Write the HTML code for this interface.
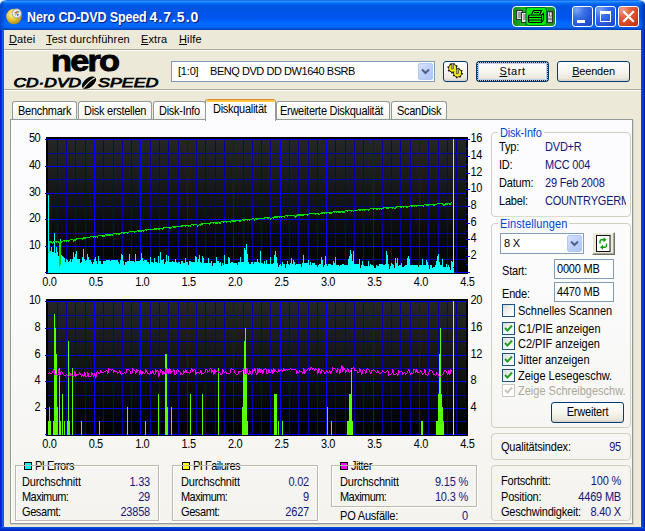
<!DOCTYPE html>
<html lang="de">
<head>
<meta charset="utf-8">
<title>Nero CD-DVD Speed 4.7.5.0</title>
<style>
*{box-sizing:border-box;margin:0;padding:0}
html,body{width:645px;height:531px;overflow:hidden}
body{position:relative;background:#ece9d8;font-family:"Liberation Sans",Arial,sans-serif;font-size:11px;color:#000;line-height:13px;-webkit-font-smoothing:antialiased}
.abs{position:absolute}
.t{position:absolute;white-space:nowrap;letter-spacing:-0.2px}
.h{transform:scaleY(1.13);transform-origin:0 10px}
.tab>span{display:inline-block;transform:scaleY(1.13);transform-origin:0 4px}
u{text-decoration:underline;text-underline-offset:1px}
/* window frame */
#frame{position:absolute;left:0;top:0;width:645px;height:531px;background:#0831d9;border-radius:7px 7px 0 0;overflow:hidden}
#corners{position:absolute;left:0;top:0;width:645px;height:10px;background:#fff}
#title{position:absolute;left:0;top:0;width:645px;height:30px;border-radius:7px 7px 0 0;
background:linear-gradient(180deg,#0058ee 0%,#3593ff 4%,#288eff 6%,#127dff 8%,#036ffc 10%,#0262ee 14%,#0057e5 20%,#0054e3 24%,#0055eb 56%,#005bf5 66%,#026afe 76%,#0266f6 90%,#0052d4 95%,#003cb0 100%)}
#title:before{content:"";position:absolute;left:0;top:0;width:5px;height:30px;border-radius:8px 0 0 0;background:linear-gradient(90deg,#0046c8,rgba(0,70,200,0))}
#title:after{content:"";position:absolute;right:0;top:0;width:5px;height:30px;border-radius:0 8px 0 0;background:linear-gradient(270deg,#0034a8,rgba(0,52,168,0))}
.ttext{position:absolute;left:27px;top:9px;font-size:14px;line-height:17px;font-weight:bold;color:#fff;white-space:nowrap;letter-spacing:-0.1px;text-shadow:1px 1px 1px #0a1883;transform-origin:0 0}
#client{position:absolute;left:4px;top:30px;width:637px;height:497px;background:#ece9d8}
#lb{position:absolute;left:0;top:30px;width:4px;height:501px;background:linear-gradient(90deg,#0019cf 0,#0831d9 40%,#166aee 70%,#0855dd 100%)}
#rb{position:absolute;left:641px;top:30px;width:4px;height:501px;background:linear-gradient(90deg,#0855dd 0,#0039d6 40%,#0831d9 70%,#00138c 100%)}
#bb{position:absolute;left:0;top:527px;width:645px;height:4px;background:linear-gradient(180deg,#0855dd 0,#0039d6 40%,#0831d9 70%,#00138c 100%)}
.cbtn{position:absolute;top:6px;width:21px;height:21px;border:1px solid #fff;border-radius:3px;background:radial-gradient(circle at 20% 15%,#7ea6f5 0,#3a6fe8 35%,#2254d8 70%,#1b46c4 100%)}
#bclose{background:radial-gradient(circle at 20% 15%,#f2a18a 0,#e0613c 35%,#cf4420 70%,#b5300f 100%)}
.sep{position:absolute;left:4px;width:637px;height:2px;border-top:1px solid #aca899;border-bottom:1px solid #fff}
/* buttons */
.btn{position:absolute;letter-spacing:0.15px;height:21px;border:1px solid #003c74;border-radius:3px;background:linear-gradient(180deg,#fff 0,#f6f5ef 50%,#ebe8dc 85%,#d6d0c5 100%);text-align:center;line-height:19px;font-size:11px}
.edit{position:absolute;background:#fff;border:1px solid #7f9db9}
.ddb{position:absolute;width:15px;height:17px;border:1px solid #b4c8f7;border-radius:2px;background:linear-gradient(135deg,#d6e1fd 0,#c1d2fa 45%,#aec3f6 100%)}
.tab{position:absolute;top:101px;height:19px;border:1px solid #919b9c;border-bottom:none;border-radius:3px 3px 0 0;background:linear-gradient(180deg,#fff 0,#fbfbf8 60%,#efeee6 100%);font-size:11px;line-height:17px;padding-left:5px;white-space:nowrap;letter-spacing:-0.28px}
#page{position:absolute;left:10px;top:119px;width:623px;height:405px;border:1px solid #919b9c;background:linear-gradient(180deg,#fcfcfe 0,#fbfbfc 40%,#f4f3ee 100%);box-shadow:1px 1px 0 #d5d2c4, inset 1px 0 0 #fff, inset 0 -2px 0 #fcfcfa}
.gb{position:absolute;border:1px solid #d0d0bf;border-radius:4px}
.gb2{position:absolute;z-index:5;border:1px solid #bcbaab}
.gb2w{position:absolute;border:1px solid #fff}
.lg{position:absolute;color:#0046d5;white-space:nowrap;letter-spacing:-0.2px}
.v{color:#15157a}
.r{text-align:right}
.cb{position:absolute;width:13px;height:13px;border:1px solid #1c5180;background:linear-gradient(135deg,#dcdcd7 0,#f3f3ef 50%,#fff 100%)}
.cb.dis{border-color:#cac8bb;background:#fff}
</style>
</head>
<body>
<div id="frame"></div>
<div id="corners"></div>
<div id="title">
  <div class="ttext" style="transform:scaleX(0.89)">Nero CD-DVD Speed</div><div class="ttext" style="left:149.5px;letter-spacing:1px">4.7.5.0</div>
</div>
<div id="lb"></div><div id="rb"></div><div id="bb"></div>
<div id="client"></div>

<!-- app icon -->
<svg class="abs" style="left:6px;top:8px" width="17" height="17" viewBox="0 0 17 17">
  <defs><radialGradient id="gold" cx="0.4" cy="0.35" r="0.7"><stop offset="0" stop-color="#fff6a0"/><stop offset="0.5" stop-color="#e8c838"/><stop offset="1" stop-color="#a88410"/></radialGradient></defs>
  <circle cx="8" cy="8.5" r="7.8" fill="url(#gold)"/>
  <circle cx="10.8" cy="5.4" r="4.6" fill="#e8eef4" stroke="#8a8f98" stroke-width="0.8"/>
  <path d="M8.2 5.2 L10.5 3 L11.2 5.5 Z" fill="#d63a1e"/>
  <path d="M11 2.6 L13.4 3.8 L11.6 5.2 Z" fill="#2f9a3c"/>
  <path d="M10.4 5.8 L13.2 6.2 L11.4 8.4 Z" fill="#2a78d8"/>
  <path d="M8.6 6.2 L10.2 6.4 L9.4 8 Z" fill="#e8a020"/>
</svg>

<!-- green toolbar in title -->
<div class="abs" style="left:512px;top:6px;width:44px;height:21px;border:1px solid #fff;border-radius:4px;background:linear-gradient(90deg,#0c8c10 0,#1fb822 28%,#0e9612 30%,#0e9612 72%,#1fb822 74%,#0c8c10 100%);overflow:hidden">
  <svg class="abs" style="left:0;top:0" width="42" height="19" viewBox="0 0 42 19">
    <!-- left: documents -->
    <rect x="3.5" y="3.5" width="6" height="9" fill="#d4d8d4" stroke="#333"/>
    <path d="M5 6h3M5 8h3M5 10h3" stroke="#666" stroke-width="1"/>
    <rect x="8.5" y="5.5" width="5" height="10" fill="#e4e6e4" stroke="#333"/>
    <path d="M10 8h3M10 10h3M10 12h3" stroke="#666" stroke-width="1"/>
    <!-- middle highlighted -->
    <rect x="13" y="0.5" width="20.5" height="18" rx="2.5" fill="#00f000" stroke="#063" stroke-width="1"/>
    <path d="M18.5 7.5 L20.5 3.5 H28.5 L26.5 7.5" fill="#00f000" stroke="#000" stroke-width="1.2"/>
    <path d="M21 5.5h5" stroke="#000" stroke-width="0.9"/>
    <path d="M17 8 H28.5 L30.5 6.5 V12.5 L28.5 15.5 H17 Q15.5 15.5 15.5 13.5 V9.5 Q15.5 8 17 8 Z" fill="#00f000" stroke="#000" stroke-width="1.2"/>
    <path d="M16 10.5 H28.5 M16 13 H28.5 M28.5 8 V15.5" stroke="#000" stroke-width="1" fill="none"/>
    <!-- right: floppy -->
    <rect x="34.5" y="4.5" width="5" height="11" fill="#c8ccc8" stroke="#333"/>
    <rect x="36.5" y="5" width="2.5" height="4" fill="#eee" stroke="#333" stroke-width="0.6"/>
    <path d="M35 12h4" stroke="#555"/>
  </svg>
</div>

<!-- caption buttons -->
<div class="cbtn" style="left:572px"><div class="abs" style="left:4px;top:13px;width:8px;height:3px;background:#fff"></div></div>
<div class="cbtn" style="left:595px"><div class="abs" style="left:4px;top:4px;width:11px;height:11px;border:1px solid #fff;border-top-width:3px"></div></div>
<div class="cbtn" id="bclose" style="left:618px">
  <svg class="abs" style="left:0;top:0" width="19" height="19" viewBox="0 0 19 19"><path d="M5 5 L14 14 M14 5 L5 14" stroke="#fff" stroke-width="2.2" stroke-linecap="square"/></svg>
</div>

<!-- menu -->
<div class="t" style="left:9px;top:33px;letter-spacing:0.12px"><u>D</u>atei</div>
<div class="t" style="left:46px;top:33px;letter-spacing:0.12px"><u>T</u>est durchführen</div>
<div class="t" style="left:141px;top:33px;letter-spacing:0.12px"><u>E</u>xtra</div>
<div class="t" style="left:179px;top:33px;letter-spacing:0.12px"><u>H</u>ilfe</div>
<div class="sep" style="top:49px"></div>
<div class="sep" style="top:89px"></div>

<!-- logo -->
<div class="abs" style="left:51px;top:45.5px;font-size:30px;line-height:30px;font-weight:bold;letter-spacing:-1.6px;color:#000;white-space:nowrap;-webkit-text-stroke:0.9px #000;transform:scaleX(1.145);transform-origin:0 0">nero</div>
<svg class="abs" style="left:12px;top:74px" width="150" height="18" viewBox="0 0 150 18">
  <g font-family="Liberation Sans, Arial, sans-serif" font-style="italic" font-size="12.6" fill="#000" stroke="#000" stroke-width="0.75">
    <text x="1.5" y="13" textLength="67.5" lengthAdjust="spacingAndGlyphs">CD·DVD</text>
    <text x="86" y="13" textLength="60.5" lengthAdjust="spacingAndGlyphs">SPEED</text>
  </g>
  <ellipse cx="77" cy="8.6" rx="8.2" ry="4.6" transform="rotate(-38 77 8.6)" fill="#000"/>
  <path d="M71.5 14 C74 11 78 6 83.5 3.5" stroke="#ece9d8" stroke-width="1.1" fill="none"/>
</svg>

<!-- drive combo -->
<div class="edit" style="left:171px;top:61px;width:264px;height:21px"></div>
<div class="t" style="left:178px;top:65px">[1:0]</div><div class="t" style="left:210px;top:65px;letter-spacing:-0.45px">BENQ DVD DD DW1640 BSRB</div>
<div class="ddb" style="left:418px;top:63px"><svg width="15" height="15" viewBox="0 0 15 15" style="position:absolute;left:-1px;top:0"><path d="M4 5.5 L7.5 9 L11 5.5" fill="none" stroke="#4d6185" stroke-width="2"/></svg></div>

<!-- icon button -->
<div class="btn" style="left:443px;top:61px;width:25px"></div>
<svg class="abs" style="left:446px;top:62px" width="18" height="17" viewBox="0 0 18 17">
  <g fill="#f4ec00" stroke="#1a1400" stroke-width="1">
    <circle cx="6.7" cy="6.2" r="4"/><circle cx="6.7" cy="6.2" r="4.6" fill="none" stroke-width="1.5" stroke-dasharray="1.5 2.1"/>
    <circle cx="11.6" cy="11" r="4"/><circle cx="11.6" cy="11" r="4.6" fill="none" stroke-width="1.5" stroke-dasharray="1.5 2.1"/>
  </g>
  <circle cx="6.7" cy="6.2" r="3.4" fill="#f4ec00"/><circle cx="11.6" cy="11" r="3.4" fill="#f4ec00"/>
  <rect x="5.7" y="1.5" width="2" height="5.5" fill="#9aa0a8" stroke="#333" stroke-width="0.5"/>
  <rect x="10.6" y="6.3" width="2" height="5.5" fill="#9aa0a8" stroke="#333" stroke-width="0.5"/>
</svg>

<!-- Start / Beenden -->
<div class="btn" style="left:476px;top:61px;width:73px;box-shadow:inset 0 0 0 2px #bdcff2"><div class="abs" style="left:0;top:0;width:71px;height:19px;border:1px dotted #221a10"></div><span class="t" style="position:relative;top:0;letter-spacing:0.55px"><u>S</u>tart</span></div>
<div class="btn" style="left:557px;top:61px;width:73px"><span class="t" style="position:relative"><u>B</u>eenden</span></div>

<!-- tabs -->
<div class="tab" style="left:12px;width:65px"><span>Benchmark</span></div>
<div class="tab" style="left:78px;width:74px"><span>Disk erstellen</span></div>
<div class="tab" style="left:153px;width:53px"><span>Disk-Info</span></div>
<div class="tab" style="left:276px;width:114px;padding-left:3px"><span>Erweiterte Diskqualität</span></div>
<div class="tab" style="left:391px;width:56px"><span>ScanDisk</span></div>
<div id="page"></div>
<div class="tab" style="left:205px;top:99px;width:71px;height:22px;background:#fcfcfe;border-top:none;padding-left:7px;line-height:18px;overflow:hidden"><div class="abs" style="left:-1px;top:0;width:72px;height:3px;border-radius:3px 3px 0 0;background:linear-gradient(180deg,#e68b2c 0,#e68b2c 34%,#ffc73c 34%,#ffc73c 100%)"></div><span>Diskqualität</span></div>

<svg width="645" height="531" viewBox="0 0 645 531" style="position:absolute;left:0;top:0" shape-rendering="crispEdges">
<defs><linearGradient id="g1" x1="0" y1="0" x2="0" y2="1"><stop offset="0" stop-color="#262626"/><stop offset="1" stop-color="#000"/></linearGradient><linearGradient id="g2" x1="0" y1="0" x2="0" y2="1"><stop offset="0" stop-color="#262626"/><stop offset="1" stop-color="#000"/></linearGradient></defs>
<rect x="46" y="137" width="422" height="137" fill="#000"/>
<rect x="48" y="139" width="418" height="134" fill="url(#g1)"/>
<rect x="57" y="139" width="1" height="134" fill="#0000a8"/>
<rect x="66" y="139" width="1" height="134" fill="#0000a8"/>
<rect x="75" y="139" width="1" height="134" fill="#0000a8"/>
<rect x="85" y="139" width="1" height="134" fill="#0000a8"/>
<rect x="94" y="139" width="1" height="134" fill="#0000ff"/>
<rect x="103" y="139" width="1" height="134" fill="#0000a8"/>
<rect x="113" y="139" width="1" height="134" fill="#0000a8"/>
<rect x="122" y="139" width="1" height="134" fill="#0000a8"/>
<rect x="131" y="139" width="1" height="134" fill="#0000a8"/>
<rect x="140" y="139" width="1" height="134" fill="#0000ff"/>
<rect x="150" y="139" width="1" height="134" fill="#0000a8"/>
<rect x="159" y="139" width="1" height="134" fill="#0000a8"/>
<rect x="168" y="139" width="1" height="134" fill="#0000a8"/>
<rect x="178" y="139" width="1" height="134" fill="#0000a8"/>
<rect x="187" y="139" width="1" height="134" fill="#0000ff"/>
<rect x="196" y="139" width="1" height="134" fill="#0000a8"/>
<rect x="205" y="139" width="1" height="134" fill="#0000a8"/>
<rect x="215" y="139" width="1" height="134" fill="#0000a8"/>
<rect x="224" y="139" width="1" height="134" fill="#0000a8"/>
<rect x="233" y="139" width="1" height="134" fill="#0000ff"/>
<rect x="243" y="139" width="1" height="134" fill="#0000a8"/>
<rect x="252" y="139" width="1" height="134" fill="#0000a8"/>
<rect x="261" y="139" width="1" height="134" fill="#0000a8"/>
<rect x="270" y="139" width="1" height="134" fill="#0000a8"/>
<rect x="280" y="139" width="1" height="134" fill="#0000ff"/>
<rect x="289" y="139" width="1" height="134" fill="#0000a8"/>
<rect x="298" y="139" width="1" height="134" fill="#0000a8"/>
<rect x="308" y="139" width="1" height="134" fill="#0000a8"/>
<rect x="317" y="139" width="1" height="134" fill="#0000a8"/>
<rect x="326" y="139" width="1" height="134" fill="#0000ff"/>
<rect x="335" y="139" width="1" height="134" fill="#0000a8"/>
<rect x="345" y="139" width="1" height="134" fill="#0000a8"/>
<rect x="354" y="139" width="1" height="134" fill="#0000a8"/>
<rect x="363" y="139" width="1" height="134" fill="#0000a8"/>
<rect x="373" y="139" width="1" height="134" fill="#0000ff"/>
<rect x="382" y="139" width="1" height="134" fill="#0000a8"/>
<rect x="391" y="139" width="1" height="134" fill="#0000a8"/>
<rect x="400" y="139" width="1" height="134" fill="#0000a8"/>
<rect x="410" y="139" width="1" height="134" fill="#0000a8"/>
<rect x="419" y="139" width="1" height="134" fill="#0000ff"/>
<rect x="428" y="139" width="1" height="134" fill="#0000a8"/>
<rect x="438" y="139" width="1" height="134" fill="#0000a8"/>
<rect x="447" y="139" width="1" height="134" fill="#0000a8"/>
<rect x="456" y="139" width="1" height="134" fill="#0000a8"/>
<rect x="45" y="272" width="421" height="1" fill="#0000ff"/>
<rect x="48" y="259" width="418" height="1" fill="#0000a8"/>
<rect x="45" y="246" width="421" height="1" fill="#0000ff"/>
<rect x="48" y="233" width="418" height="1" fill="#0000a8"/>
<rect x="45" y="219" width="421" height="1" fill="#0000ff"/>
<rect x="48" y="206" width="418" height="1" fill="#0000a8"/>
<rect x="45" y="193" width="421" height="1" fill="#0000ff"/>
<rect x="48" y="179" width="418" height="1" fill="#0000a8"/>
<rect x="45" y="166" width="421" height="1" fill="#0000ff"/>
<rect x="48" y="153" width="418" height="1" fill="#0000a8"/>
<rect x="45" y="139" width="421" height="1" fill="#0000ff"/>
<rect x="466" y="272" width="4" height="1" fill="#0000ff"/>
<rect x="466" y="264" width="2" height="1" fill="#0000ff"/>
<rect x="466" y="256" width="4" height="1" fill="#0000ff"/>
<rect x="466" y="248" width="2" height="1" fill="#0000ff"/>
<rect x="466" y="239" width="4" height="1" fill="#0000ff"/>
<rect x="466" y="231" width="2" height="1" fill="#0000ff"/>
<rect x="466" y="223" width="4" height="1" fill="#0000ff"/>
<rect x="466" y="214" width="2" height="1" fill="#0000ff"/>
<rect x="466" y="206" width="4" height="1" fill="#0000ff"/>
<rect x="466" y="198" width="2" height="1" fill="#0000ff"/>
<rect x="466" y="189" width="4" height="1" fill="#0000ff"/>
<rect x="466" y="181" width="2" height="1" fill="#0000ff"/>
<rect x="466" y="173" width="4" height="1" fill="#0000ff"/>
<rect x="466" y="164" width="2" height="1" fill="#0000ff"/>
<rect x="466" y="156" width="4" height="1" fill="#0000ff"/>
<rect x="466" y="148" width="2" height="1" fill="#0000ff"/>
<rect x="466" y="139" width="4" height="1" fill="#0000ff"/>
<polygon points="48,273 48,195 49,195 49,251 50,251 50,251 51,251 51,247 52,247 52,252 53,252 53,252 54,252 54,233 55,233 55,253 56,253 56,247 57,247 57,252 58,252 58,256 59,256 59,256 60,256 60,239 61,239 61,255 62,255 62,256 63,256 63,257 64,257 64,258 65,258 65,262 66,262 66,259 67,259 67,260 68,260 68,262 69,262 69,261 70,261 70,259 71,259 71,262 72,262 72,259 73,259 73,252 74,252 74,257 75,257 75,254 76,254 76,251 77,251 77,259 78,259 78,259 79,259 79,259 80,259 80,263 81,263 81,262 82,262 82,257 83,257 83,249 84,249 84,259 85,259 85,261 86,261 86,260 87,260 87,254 88,254 88,257 89,257 89,260 90,260 90,260 91,260 91,262 92,262 92,264 93,264 93,262 94,262 94,259 95,259 95,257 96,257 96,261 97,261 97,264 98,264 98,256 99,256 99,261 100,261 100,261 101,261 101,264 102,264 102,264 103,264 103,261 104,261 104,261 105,261 105,261 106,261 106,260 107,260 107,260 108,260 108,260 109,260 109,260 110,260 110,261 111,261 111,260 112,260 112,260 113,260 113,260 114,260 114,260 115,260 115,260 116,260 116,260 117,260 117,260 118,260 118,262 119,262 119,264 120,264 120,260 121,260 121,254 122,254 122,255 123,255 123,261 124,261 124,265 125,265 125,262 126,262 126,262 127,262 127,261 128,261 128,261 129,261 129,254 130,254 130,261 131,261 131,261 132,261 132,261 133,261 133,261 134,261 134,262 135,262 135,254 136,254 136,261 137,261 137,261 138,261 138,261 139,261 139,261 140,261 140,260 141,260 141,253 142,253 142,258 143,258 143,261 144,261 144,260 145,260 145,260 146,260 146,260 147,260 147,262 148,262 148,262 149,262 149,264 150,264 150,257 151,257 151,262 152,262 152,262 153,262 153,263 154,263 154,258 155,258 155,262 156,262 156,262 157,262 157,263 158,263 158,256 159,256 159,263 160,263 160,252 161,252 161,260 162,260 162,260 163,260 163,259 164,259 164,264 165,264 165,262 166,262 166,255 167,255 167,261 168,261 168,256 169,256 169,262 170,262 170,262 171,262 171,262 172,262 172,261 173,261 173,262 174,262 174,262 175,262 175,259 176,259 176,262 177,262 177,263 178,263 178,262 179,262 179,262 180,262 180,264 181,264 181,261 182,261 182,261 183,261 183,263 184,263 184,263 185,263 185,258 186,258 186,262 187,262 187,262 188,262 188,265 189,265 189,261 190,261 190,261 191,261 191,262 192,262 192,262 193,262 193,262 194,262 194,262 195,262 195,256 196,256 196,257 197,257 197,262 198,262 198,259 199,259 199,255 200,255 200,262 201,262 201,263 202,263 202,256 203,256 203,258 204,258 204,263 205,263 205,263 206,263 206,263 207,263 207,263 208,263 208,258 209,258 209,263 210,263 210,263 211,263 211,261 212,261 212,266 213,266 213,263 214,263 214,263 215,263 215,263 216,263 216,257 217,257 217,261 218,261 218,261 219,261 219,263 220,263 220,262 221,262 221,266 222,266 222,263 223,263 223,265 224,265 224,255 225,255 225,264 226,264 226,264 227,264 227,264 228,264 228,257 229,257 229,258 230,258 230,263 231,263 231,262 232,262 232,262 233,262 233,263 234,263 234,263 235,263 235,263 236,263 236,263 237,263 237,265 238,265 238,262 239,262 239,262 240,262 240,257 241,257 241,262 242,262 242,262 243,262 243,262 244,262 244,248 245,248 245,250 246,250 246,244 247,244 247,254 248,254 248,262 249,262 249,264 250,264 250,264 251,264 251,262 252,262 252,262 253,262 253,264 254,264 254,262 255,262 255,262 256,262 256,262 257,262 257,259 258,259 258,262 259,262 259,263 260,263 260,251 261,251 261,263 262,263 262,263 263,263 263,264 264,264 264,261 265,261 265,264 266,264 266,260 267,260 267,264 268,264 268,264 269,264 269,264 270,264 270,257 271,257 271,264 272,264 272,264 273,264 273,263 274,263 274,255 275,255 275,251 276,251 276,257 277,257 277,263 278,263 278,267 279,267 279,265 280,265 280,264 281,264 281,266 282,266 282,262 283,262 283,264 284,264 284,264 285,264 285,268 286,268 286,264 287,264 287,261 288,261 288,264 289,264 289,265 290,265 290,263 291,263 291,258 292,258 292,264 293,264 293,260 294,260 294,262 295,262 295,265 296,265 296,264 297,264 297,264 298,264 298,264 299,264 299,264 300,264 300,264 301,264 301,267 302,267 302,263 303,263 303,255 304,255 304,263 305,263 305,263 306,263 306,263 307,263 307,263 308,263 308,260 309,260 309,265 310,265 310,262 311,262 311,265 312,265 312,263 313,263 313,263 314,263 314,263 315,263 315,265 316,265 316,265 317,265 317,267 318,267 318,265 319,265 319,264 320,264 320,264 321,264 321,257 322,257 322,260 323,260 323,267 324,267 324,265 325,265 325,256 326,256 326,264 327,264 327,266 328,266 328,264 329,264 329,264 330,264 330,264 331,264 331,265 332,265 332,265 333,265 333,261 334,261 334,263 335,263 335,257 336,257 336,265 337,265 337,265 338,265 338,265 339,265 339,266 340,266 340,265 341,265 341,265 342,265 342,264 343,264 343,264 344,264 344,265 345,265 345,265 346,265 346,265 347,265 347,265 348,265 348,259 349,259 349,256 350,256 350,250 351,250 351,254 352,254 352,261 353,261 353,251 354,251 354,264 355,264 355,264 356,264 356,264 357,264 357,264 358,264 358,264 359,264 359,259 360,259 360,268 361,268 361,265 362,265 362,261 363,261 363,265 364,265 364,266 365,266 365,266 366,266 366,266 367,266 367,266 368,266 368,261 369,261 369,266 370,266 370,264 371,264 371,265 372,265 372,265 373,265 373,266 374,266 374,268 375,268 375,268 376,268 376,265 377,265 377,266 378,266 378,266 379,266 379,264 380,264 380,264 381,264 381,264 382,264 382,264 383,264 383,265 384,265 384,265 385,265 385,264 386,264 386,251 387,251 387,255 388,255 388,264 389,264 389,269 390,269 390,266 391,266 391,263 392,263 392,264 393,264 393,265 394,265 394,268 395,268 395,258 396,258 396,263 397,263 397,258 398,258 398,266 399,266 399,265 400,265 400,265 401,265 401,263 402,263 402,267 403,267 403,267 404,267 404,266 405,266 405,265 406,265 406,265 407,265 407,258 408,258 408,256 409,256 409,259 410,259 410,265 411,265 411,265 412,265 412,265 413,265 413,265 414,265 414,265 415,265 415,265 416,265 416,265 417,265 417,265 418,265 418,267 419,267 419,265 420,265 420,265 421,265 421,265 422,265 422,259 423,259 423,265 424,265 424,265 425,265 425,265 426,265 426,260 427,260 427,262 428,262 428,265 429,265 429,269 430,269 430,265 431,265 431,265 432,265 432,268 433,268 433,267 434,267 434,267 435,267 435,265 436,265 436,261 437,261 437,256 438,256 438,254 439,254 439,262 440,262 440,265 441,265 441,265 442,265 442,259 443,259 443,267 444,267 444,267 445,267 445,267 446,267 446,264 447,264 447,267 448,267 448,265 449,265 449,267 450,267 450,270 451,270 451,261 452,261 452,262 453,262 454,273" fill="#00ffff"/>
<path d="M48.5 252v1M49.5 241v11M50.5 241v2M51.5 241v2M52.5 242v2M53.5 241v2M54.5 241v1M55.5 241v1M56.5 241v2M57.5 241v1M58.5 241v2M59.5 242v2M60.5 241v1M61.5 241v2M62.5 241v1M63.5 240v1M64.5 240v2M65.5 240v1M66.5 240v2M67.5 240v1M68.5 240v2M69.5 240v1M70.5 239v1M71.5 239v1M72.5 239v1M73.5 240v2M74.5 239v2M75.5 239v2M76.5 238v2M77.5 238v1M78.5 238v1M79.5 238v1M80.5 238v1M81.5 238v1M82.5 238v2M83.5 237v2M84.5 237v2M85.5 237v2M86.5 237v1M87.5 237v1M88.5 237v1M89.5 237v1M90.5 236v1M91.5 236v1M92.5 236v1M93.5 236v2M94.5 236v1M95.5 236v2M96.5 236v1M97.5 236v2M98.5 235v1M99.5 235v1M100.5 235v1M101.5 235v1M102.5 235v2M103.5 235v2M104.5 235v2M105.5 234v1M106.5 234v2M107.5 234v2M108.5 234v2M109.5 234v2M110.5 234v2M111.5 234v1M112.5 234v2M113.5 233v1M114.5 233v1M115.5 233v1M116.5 233v2M117.5 233v1M118.5 233v2M119.5 233v2M120.5 233v1M121.5 232v2M122.5 232v1M123.5 232v2M124.5 232v2M125.5 232v1M126.5 232v1M127.5 232v2M128.5 232v1M129.5 231v1M130.5 231v1M131.5 231v1M132.5 231v1M133.5 231v1M134.5 231v2M135.5 231v1M136.5 231v1M137.5 230v1M138.5 230v2M139.5 230v2M140.5 230v2M141.5 230v2M142.5 230v1M143.5 230v2M144.5 230v1M145.5 229v1M146.5 229v2M147.5 229v1M148.5 229v1M149.5 229v1M150.5 229v1M151.5 229v1M152.5 229v1M153.5 229v1M154.5 228v2M155.5 228v2M156.5 228v2M157.5 228v1M158.5 228v2M159.5 228v2M160.5 228v1M161.5 228v1M162.5 228v2M163.5 227v2M164.5 227v1M165.5 227v1M166.5 227v1M167.5 227v1M168.5 227v1M169.5 227v2M170.5 227v2M171.5 227v1M172.5 226v1M173.5 226v2M174.5 226v2M175.5 226v2M176.5 226v1M177.5 226v1M178.5 226v1M179.5 226v1M180.5 226v1M181.5 225v2M182.5 225v2M183.5 225v1M184.5 225v1M185.5 225v2M186.5 225v1M187.5 225v1M188.5 225v2M189.5 225v1M190.5 225v2M191.5 224v1M192.5 224v1M193.5 224v2M194.5 224v1M195.5 224v1M196.5 224v1M197.5 225v2M198.5 225v1M199.5 224v1M200.5 224v2M201.5 223v2M202.5 223v2M203.5 223v1M204.5 223v1M205.5 223v1M206.5 223v1M207.5 223v1M208.5 223v1M209.5 223v2M210.5 222v2M211.5 222v1M212.5 222v1M213.5 222v2M214.5 222v1M215.5 222v2M216.5 222v2M217.5 222v2M218.5 222v1M219.5 222v2M220.5 222v2M221.5 221v1M222.5 221v1M223.5 221v2M224.5 221v1M225.5 221v1M226.5 221v2M227.5 221v1M228.5 221v1M229.5 221v1M230.5 221v2M231.5 220v1M232.5 220v2M233.5 220v2M234.5 220v2M235.5 220v2M236.5 220v1M237.5 220v1M238.5 220v1M239.5 220v2M240.5 220v2M241.5 220v1M242.5 219v1M243.5 219v2M244.5 219v2M245.5 219v1M246.5 219v1M247.5 219v2M248.5 219v1M249.5 219v2M250.5 219v1M251.5 219v1M252.5 218v1M253.5 218v1M254.5 219v2M255.5 218v1M256.5 218v2M257.5 218v2M258.5 218v1M259.5 218v1M260.5 218v1M261.5 218v1M262.5 218v1M263.5 218v1M264.5 217v2M265.5 217v1M266.5 217v1M267.5 217v2M268.5 217v2M269.5 217v1M270.5 218v2M271.5 218v1M272.5 217v1M273.5 217v2M274.5 216v2M275.5 216v2M276.5 216v2M277.5 216v2M278.5 216v1M279.5 216v2M280.5 216v1M281.5 216v2M282.5 216v1M283.5 216v1M284.5 216v2M285.5 215v1M286.5 215v1M287.5 215v2M288.5 215v1M289.5 215v1M290.5 215v1M291.5 215v1M292.5 215v1M293.5 215v1M294.5 215v2M295.5 216v2M296.5 215v2M297.5 214v2M298.5 214v2M299.5 214v2M300.5 214v2M301.5 214v2M302.5 214v2M303.5 214v2M304.5 214v1M305.5 214v1M306.5 214v1M307.5 214v2M308.5 214v1M309.5 213v1M310.5 213v1M311.5 213v1M312.5 213v1M313.5 213v1M314.5 213v1M315.5 213v2M316.5 213v1M317.5 213v1M318.5 213v2M319.5 214v1M320.5 213v1M321.5 212v2M322.5 212v2M323.5 212v1M324.5 212v2M325.5 212v1M326.5 212v2M327.5 212v1M328.5 212v1M329.5 212v2M330.5 212v2M331.5 212v2M332.5 212v1M333.5 211v1M334.5 211v2M335.5 211v1M336.5 211v2M337.5 211v1M338.5 211v2M339.5 211v2M340.5 211v2M341.5 211v1M342.5 211v2M343.5 211v2M344.5 211v2M345.5 210v1M346.5 210v1M347.5 210v2M348.5 210v1M349.5 210v1M350.5 210v1M351.5 210v2M352.5 210v1M353.5 211v1M354.5 210v1M355.5 210v1M356.5 210v1M357.5 210v1M358.5 209v1M359.5 209v2M360.5 209v2M361.5 209v1M362.5 209v2M363.5 209v1M364.5 209v2M365.5 209v1M366.5 209v1M367.5 209v1M368.5 209v2M369.5 209v1M370.5 208v1M371.5 208v1M372.5 208v1M373.5 208v2M374.5 208v1M375.5 208v1M376.5 208v2M377.5 208v2M378.5 208v1M379.5 208v2M380.5 208v1M381.5 208v2M382.5 208v1M383.5 207v2M384.5 207v1M385.5 207v1M386.5 207v2M387.5 207v2M388.5 207v2M389.5 207v1M390.5 207v1M391.5 207v1M392.5 207v2M393.5 207v1M394.5 208v1M395.5 207v2M396.5 206v2M397.5 206v1M398.5 206v1M399.5 206v1M400.5 206v2M401.5 206v2M402.5 206v1M403.5 206v2M404.5 206v1M405.5 206v1M406.5 206v2M407.5 206v2M408.5 206v1M409.5 206v1M410.5 205v1M411.5 205v2M412.5 205v2M413.5 205v1M414.5 205v2M415.5 205v1M416.5 205v2M417.5 205v1M418.5 205v1M419.5 205v1M420.5 205v1M421.5 205v1M422.5 205v1M423.5 205v2M424.5 204v1M425.5 204v1M426.5 204v2M427.5 204v2M428.5 204v2M429.5 204v1M430.5 204v1M431.5 204v1M432.5 204v1M433.5 204v2M434.5 204v2M435.5 204v1M436.5 204v1M437.5 203v1M438.5 203v1M439.5 203v1M440.5 203v1M441.5 203v1M442.5 203v2M443.5 204v2M444.5 204v2M445.5 203v2M446.5 203v2M447.5 203v2M448.5 203v1M449.5 203v2M450.5 203v2M451.5 202v1M59.5 242v25M60.5 241v24" fill="none" stroke="#00dc00" stroke-width="1"/>
<rect x="453" y="139" width="1" height="128" fill="#d0d0d0"/>
<rect x="46" y="299" width="422" height="137" fill="#000"/>
<rect x="48" y="301" width="418" height="134" fill="url(#g2)"/>
<rect x="57" y="301" width="1" height="134" fill="#0000a8"/>
<rect x="66" y="301" width="1" height="134" fill="#0000a8"/>
<rect x="75" y="301" width="1" height="134" fill="#0000a8"/>
<rect x="85" y="301" width="1" height="134" fill="#0000a8"/>
<rect x="94" y="301" width="1" height="134" fill="#0000ff"/>
<rect x="103" y="301" width="1" height="134" fill="#0000a8"/>
<rect x="113" y="301" width="1" height="134" fill="#0000a8"/>
<rect x="122" y="301" width="1" height="134" fill="#0000a8"/>
<rect x="131" y="301" width="1" height="134" fill="#0000a8"/>
<rect x="140" y="301" width="1" height="134" fill="#0000ff"/>
<rect x="150" y="301" width="1" height="134" fill="#0000a8"/>
<rect x="159" y="301" width="1" height="134" fill="#0000a8"/>
<rect x="168" y="301" width="1" height="134" fill="#0000a8"/>
<rect x="178" y="301" width="1" height="134" fill="#0000a8"/>
<rect x="187" y="301" width="1" height="134" fill="#0000ff"/>
<rect x="196" y="301" width="1" height="134" fill="#0000a8"/>
<rect x="205" y="301" width="1" height="134" fill="#0000a8"/>
<rect x="215" y="301" width="1" height="134" fill="#0000a8"/>
<rect x="224" y="301" width="1" height="134" fill="#0000a8"/>
<rect x="233" y="301" width="1" height="134" fill="#0000ff"/>
<rect x="243" y="301" width="1" height="134" fill="#0000a8"/>
<rect x="252" y="301" width="1" height="134" fill="#0000a8"/>
<rect x="261" y="301" width="1" height="134" fill="#0000a8"/>
<rect x="270" y="301" width="1" height="134" fill="#0000a8"/>
<rect x="280" y="301" width="1" height="134" fill="#0000ff"/>
<rect x="289" y="301" width="1" height="134" fill="#0000a8"/>
<rect x="298" y="301" width="1" height="134" fill="#0000a8"/>
<rect x="308" y="301" width="1" height="134" fill="#0000a8"/>
<rect x="317" y="301" width="1" height="134" fill="#0000a8"/>
<rect x="326" y="301" width="1" height="134" fill="#0000ff"/>
<rect x="335" y="301" width="1" height="134" fill="#0000a8"/>
<rect x="345" y="301" width="1" height="134" fill="#0000a8"/>
<rect x="354" y="301" width="1" height="134" fill="#0000a8"/>
<rect x="363" y="301" width="1" height="134" fill="#0000a8"/>
<rect x="373" y="301" width="1" height="134" fill="#0000ff"/>
<rect x="382" y="301" width="1" height="134" fill="#0000a8"/>
<rect x="391" y="301" width="1" height="134" fill="#0000a8"/>
<rect x="400" y="301" width="1" height="134" fill="#0000a8"/>
<rect x="410" y="301" width="1" height="134" fill="#0000a8"/>
<rect x="419" y="301" width="1" height="134" fill="#0000ff"/>
<rect x="428" y="301" width="1" height="134" fill="#0000a8"/>
<rect x="438" y="301" width="1" height="134" fill="#0000a8"/>
<rect x="447" y="301" width="1" height="134" fill="#0000a8"/>
<rect x="456" y="301" width="1" height="134" fill="#0000a8"/>
<rect x="45" y="434" width="421" height="1" fill="#0000ff"/>
<rect x="48" y="421" width="418" height="1" fill="#0000a8"/>
<rect x="45" y="408" width="421" height="1" fill="#0000ff"/>
<rect x="48" y="395" width="418" height="1" fill="#0000a8"/>
<rect x="45" y="381" width="421" height="1" fill="#0000ff"/>
<rect x="48" y="368" width="418" height="1" fill="#0000a8"/>
<rect x="45" y="355" width="421" height="1" fill="#0000ff"/>
<rect x="48" y="341" width="418" height="1" fill="#0000a8"/>
<rect x="45" y="328" width="421" height="1" fill="#0000ff"/>
<rect x="48" y="315" width="418" height="1" fill="#0000a8"/>
<rect x="45" y="301" width="421" height="1" fill="#0000ff"/>
<rect x="48" y="421" width="1" height="14" fill="#58ff00"/>
<rect x="49" y="407" width="1" height="28" fill="#58ff00"/>
<rect x="50" y="421" width="1" height="14" fill="#58ff00"/>
<rect x="53" y="421" width="1" height="14" fill="#58ff00"/>
<rect x="54" y="314" width="1" height="121" fill="#58ff00"/>
<rect x="55" y="328" width="1" height="107" fill="#58ff00"/>
<rect x="56" y="354" width="1" height="81" fill="#58ff00"/>
<rect x="57" y="407" width="1" height="28" fill="#58ff00"/>
<rect x="59" y="368" width="1" height="67" fill="#58ff00"/>
<rect x="60" y="421" width="1" height="14" fill="#58ff00"/>
<rect x="62" y="394" width="1" height="41" fill="#58ff00"/>
<rect x="64" y="421" width="1" height="14" fill="#58ff00"/>
<rect x="67" y="421" width="1" height="14" fill="#58ff00"/>
<rect x="68" y="341" width="1" height="94" fill="#58ff00"/>
<rect x="69" y="421" width="1" height="14" fill="#58ff00"/>
<rect x="72" y="368" width="1" height="67" fill="#58ff00"/>
<rect x="81" y="421" width="1" height="14" fill="#58ff00"/>
<rect x="99" y="421" width="1" height="14" fill="#58ff00"/>
<rect x="127" y="407" width="1" height="28" fill="#58ff00"/>
<rect x="145" y="421" width="1" height="14" fill="#58ff00"/>
<rect x="158" y="394" width="1" height="41" fill="#58ff00"/>
<rect x="165" y="354" width="1" height="81" fill="#58ff00"/>
<rect x="166" y="354" width="1" height="81" fill="#58ff00"/>
<rect x="167" y="407" width="1" height="28" fill="#58ff00"/>
<rect x="171" y="407" width="1" height="28" fill="#58ff00"/>
<rect x="190" y="394" width="1" height="41" fill="#58ff00"/>
<rect x="202" y="394" width="1" height="41" fill="#58ff00"/>
<rect x="218" y="368" width="1" height="67" fill="#58ff00"/>
<rect x="242" y="407" width="1" height="28" fill="#58ff00"/>
<rect x="243" y="368" width="1" height="67" fill="#58ff00"/>
<rect x="244" y="341" width="1" height="94" fill="#58ff00"/>
<rect x="245" y="328" width="1" height="107" fill="#58ff00"/>
<rect x="246" y="368" width="1" height="67" fill="#58ff00"/>
<rect x="247" y="421" width="1" height="14" fill="#58ff00"/>
<rect x="274" y="394" width="1" height="41" fill="#58ff00"/>
<rect x="275" y="394" width="1" height="41" fill="#58ff00"/>
<rect x="276" y="394" width="1" height="41" fill="#58ff00"/>
<rect x="278" y="421" width="1" height="14" fill="#58ff00"/>
<rect x="282" y="421" width="1" height="14" fill="#58ff00"/>
<rect x="327" y="407" width="1" height="28" fill="#58ff00"/>
<rect x="331" y="421" width="1" height="14" fill="#58ff00"/>
<rect x="347" y="421" width="1" height="14" fill="#58ff00"/>
<rect x="348" y="421" width="1" height="14" fill="#58ff00"/>
<rect x="349" y="394" width="1" height="41" fill="#58ff00"/>
<rect x="350" y="394" width="1" height="41" fill="#58ff00"/>
<rect x="351" y="368" width="1" height="67" fill="#58ff00"/>
<rect x="352" y="421" width="1" height="14" fill="#58ff00"/>
<rect x="421" y="421" width="1" height="14" fill="#58ff00"/>
<rect x="422" y="421" width="1" height="14" fill="#58ff00"/>
<rect x="436" y="421" width="1" height="14" fill="#58ff00"/>
<rect x="437" y="421" width="1" height="14" fill="#58ff00"/>
<rect x="438" y="394" width="1" height="41" fill="#58ff00"/>
<rect x="439" y="354" width="1" height="81" fill="#58ff00"/>
<rect x="440" y="328" width="1" height="107" fill="#58ff00"/>
<rect x="441" y="394" width="1" height="41" fill="#58ff00"/>
<rect x="442" y="407" width="1" height="28" fill="#58ff00"/>
<rect x="443" y="421" width="1" height="14" fill="#58ff00"/>
<path d="M48.5 373v1M49.5 372v1M50.5 373v1M51.5 373v1M52.5 371v2M53.5 369v2M54.5 370v5M55.5 374v1M56.5 374v1M57.5 375v1M58.5 369v6M59.5 370v6M60.5 372v3M61.5 371v1M62.5 372v2M63.5 374v1M64.5 375v1M65.5 375v1M66.5 374v1M67.5 375v1M68.5 376v1M69.5 372v4M70.5 373v3M71.5 374v1M72.5 375v1M73.5 376v1M74.5 371v5M75.5 372v5M76.5 374v2M77.5 374v1M78.5 374v1M79.5 372v2M80.5 373v2M81.5 375v2M82.5 374v2M83.5 375v2M84.5 372v4M85.5 373v4M86.5 376v1M87.5 372v4M88.5 373v4M89.5 376v1M90.5 376v1M91.5 372v4M92.5 373v2M93.5 375v2M94.5 373v3M95.5 374v4M96.5 372v5M97.5 371v1M98.5 372v2M99.5 373v1M100.5 370v3M101.5 371v2M102.5 372v1M103.5 372v1M104.5 371v1M105.5 371v1M106.5 370v1M107.5 371v3M108.5 368v5M109.5 369v1M110.5 369v1M111.5 370v1M112.5 369v1M113.5 370v3M114.5 370v2M115.5 371v1M116.5 371v1M117.5 372v2M118.5 372v1M119.5 370v2M120.5 371v3M121.5 374v1M122.5 373v1M123.5 373v1M124.5 372v1M125.5 373v1M126.5 369v4M127.5 369v1M128.5 369v1M129.5 370v1M130.5 371v3M131.5 373v1M132.5 368v5M133.5 369v1M134.5 370v1M135.5 371v3M136.5 369v4M137.5 370v2M138.5 370v1M139.5 371v4M140.5 370v4M141.5 371v4M142.5 371v3M143.5 372v1M144.5 373v1M145.5 369v4M146.5 370v2M147.5 372v2M148.5 373v1M149.5 374v1M150.5 371v3M151.5 372v2M152.5 370v3M153.5 371v3M154.5 374v1M155.5 369v5M156.5 370v2M157.5 370v1M158.5 371v6M159.5 373v3M160.5 369v4M161.5 370v1M162.5 371v4M163.5 371v3M164.5 372v2M165.5 368v5M166.5 369v5M167.5 368v5M168.5 369v5M169.5 368v5M170.5 369v5M171.5 371v2M172.5 371v1M173.5 369v2M174.5 370v5M175.5 374v1M176.5 370v4M177.5 369v1M178.5 370v2M179.5 371v1M180.5 372v3M181.5 373v1M182.5 374v1M183.5 370v4M184.5 371v2M185.5 369v3M186.5 370v3M187.5 372v1M188.5 372v1M189.5 373v1M190.5 370v3M191.5 368v2M192.5 369v3M193.5 370v1M194.5 369v1M195.5 370v5M196.5 372v2M197.5 372v1M198.5 372v1M199.5 373v1M200.5 370v3M201.5 371v4M202.5 373v1M203.5 373v1M204.5 372v1M205.5 369v3M206.5 369v1M207.5 370v3M208.5 371v1M209.5 369v2M210.5 368v1M211.5 369v4M212.5 370v2M213.5 371v4M214.5 369v5M215.5 370v3M216.5 371v1M217.5 370v1M218.5 371v2M219.5 372v1M220.5 373v2M221.5 374v1M222.5 369v5M223.5 370v2M224.5 372v1M225.5 371v1M226.5 372v2M227.5 373v1M228.5 373v1M229.5 373v1M230.5 369v4M231.5 368v1M232.5 369v1M233.5 369v1M234.5 370v3M235.5 373v1M236.5 374v1M237.5 374v1M238.5 371v3M239.5 371v1M240.5 371v1M241.5 371v1M242.5 370v1M243.5 368v2M244.5 369v5M245.5 374v1M246.5 368v6M247.5 369v4M248.5 373v2M249.5 370v4M250.5 371v3M251.5 374v1M252.5 369v5M253.5 370v2M254.5 368v3M255.5 369v4M256.5 373v2M257.5 368v6M258.5 369v4M259.5 368v4M260.5 369v4M261.5 369v3M262.5 370v4M263.5 369v4M264.5 369v1M265.5 368v1M266.5 369v5M267.5 373v1M268.5 369v4M269.5 370v3M270.5 372v1M271.5 369v3M272.5 370v4M273.5 368v5M274.5 369v3M275.5 370v1M276.5 371v1M277.5 372v1M278.5 369v3M279.5 370v2M280.5 370v1M281.5 369v1M282.5 370v2M283.5 368v3M284.5 369v2M285.5 370v1M286.5 369v1M287.5 370v1M288.5 369v1M289.5 369v1M290.5 368v1M291.5 369v1M292.5 369v1M293.5 369v1M294.5 369v1M295.5 369v1M296.5 370v4M297.5 371v2M298.5 372v1M299.5 370v2M300.5 371v1M301.5 371v1M302.5 372v2M303.5 368v5M304.5 369v5M305.5 371v2M306.5 370v1M307.5 369v1M308.5 368v1M309.5 369v2M310.5 367v3M311.5 367v1M312.5 368v2M313.5 368v1M314.5 369v2M315.5 368v2M316.5 369v1M317.5 370v4M318.5 368v5M319.5 369v2M320.5 371v3M321.5 369v4M322.5 370v1M323.5 371v1M324.5 372v2M325.5 372v1M326.5 370v2M327.5 371v2M328.5 372v1M329.5 370v2M330.5 371v3M331.5 371v2M332.5 367v4M333.5 368v1M334.5 368v1M335.5 369v1M336.5 370v3M337.5 368v4M338.5 369v1M339.5 370v4M340.5 369v4M341.5 365v4M342.5 366v6M343.5 367v4M344.5 368v2M345.5 370v3M346.5 370v2M347.5 368v2M348.5 369v3M349.5 372v1M350.5 370v2M351.5 369v1M352.5 368v1M353.5 367v1M354.5 368v3M355.5 370v1M356.5 370v1M357.5 371v2M358.5 372v1M359.5 368v4M360.5 369v3M361.5 372v3M362.5 370v4M363.5 369v1M364.5 370v1M365.5 371v3M366.5 369v4M367.5 368v1M368.5 369v1M369.5 370v2M370.5 372v2M371.5 370v3M372.5 370v1M373.5 369v1M374.5 370v1M375.5 371v1M376.5 372v1M377.5 370v2M378.5 371v2M379.5 373v1M380.5 373v1M381.5 372v1M382.5 370v2M383.5 371v1M384.5 372v1M385.5 372v1M386.5 371v1M387.5 370v1M388.5 371v5M389.5 374v1M390.5 374v1M391.5 373v1M392.5 369v4M393.5 370v5M394.5 374v1M395.5 374v1M396.5 373v1M397.5 374v2M398.5 370v5M399.5 371v2M400.5 371v1M401.5 371v1M402.5 372v3M403.5 373v1M404.5 372v1M405.5 373v2M406.5 373v1M407.5 371v2M408.5 369v2M409.5 370v3M410.5 373v2M411.5 372v2M412.5 373v1M413.5 369v4M414.5 369v1M415.5 370v3M416.5 369v3M417.5 370v3M418.5 372v1M419.5 372v1M420.5 370v2M421.5 371v2M422.5 373v2M423.5 373v1M424.5 369v4M425.5 370v5M426.5 374v1M427.5 375v1M428.5 372v3M429.5 369v3M430.5 370v1M431.5 370v1M432.5 371v2M433.5 373v2M434.5 374v1M435.5 375v1M436.5 372v3M437.5 373v1M438.5 374v2M439.5 376v1M440.5 376v1M441.5 375v1M442.5 374v1M443.5 372v2M444.5 370v2M445.5 370v1M446.5 371v2M447.5 373v2M448.5 370v4M449.5 371v4M450.5 369v5M451.5 370v2" fill="none" stroke="#ff00ff" stroke-width="1"/>
<rect x="453" y="301" width="1" height="134" fill="#d0d0d0"/>
<g font-family="Liberation Sans, Arial, sans-serif" font-size="11" letter-spacing="-0.4" fill="#000" shape-rendering="auto">
<text transform="translate(40.3,249.1) scale(1,1.13)" text-anchor="end">10</text>
<text transform="translate(40.3,222.1) scale(1,1.13)" text-anchor="end">20</text>
<text transform="translate(40.3,196.1) scale(1,1.13)" text-anchor="end">30</text>
<text transform="translate(40.3,169.1) scale(1,1.13)" text-anchor="end">40</text>
<text transform="translate(40.3,142.1) scale(1,1.13)" text-anchor="end">50</text>
<text transform="translate(470.5,259.0) scale(1,1.13)">2</text>
<text transform="translate(470.5,242.0) scale(1,1.13)">4</text>
<text transform="translate(470.5,226.0) scale(1,1.13)">6</text>
<text transform="translate(470.5,209.0) scale(1,1.13)">8</text>
<text transform="translate(470.5,192.0) scale(1,1.13)">10</text>
<text transform="translate(470.5,176.0) scale(1,1.13)">12</text>
<text transform="translate(470.5,159.0) scale(1,1.13)">14</text>
<text transform="translate(470.5,142.0) scale(1,1.13)">16</text>
<text transform="translate(40.3,411.1) scale(1,1.13)" text-anchor="end">2</text>
<text transform="translate(40.3,384.1) scale(1,1.13)" text-anchor="end">4</text>
<text transform="translate(40.3,358.1) scale(1,1.13)" text-anchor="end">6</text>
<text transform="translate(40.3,331.1) scale(1,1.13)" text-anchor="end">8</text>
<text transform="translate(40.3,304.1) scale(1,1.13)" text-anchor="end">10</text>
<text transform="translate(470.5,411.0) scale(1,1.13)">4</text>
<text transform="translate(470.5,384.0) scale(1,1.13)">8</text>
<text transform="translate(470.5,358.0) scale(1,1.13)">12</text>
<text transform="translate(470.5,331.0) scale(1,1.13)">16</text>
<text transform="translate(470.5,304.0) scale(1,1.13)">20</text>
<text transform="translate(49.3,285.9) scale(1,1.13)" text-anchor="middle">0.0</text>
<text transform="translate(49.3,448.1) scale(1,1.13)" text-anchor="middle">0.0</text>
<text transform="translate(95.7,285.9) scale(1,1.13)" text-anchor="middle">0.5</text>
<text transform="translate(95.7,448.1) scale(1,1.13)" text-anchor="middle">0.5</text>
<text transform="translate(142.2,285.9) scale(1,1.13)" text-anchor="middle">1.0</text>
<text transform="translate(142.2,448.1) scale(1,1.13)" text-anchor="middle">1.0</text>
<text transform="translate(188.6,285.9) scale(1,1.13)" text-anchor="middle">1.5</text>
<text transform="translate(188.6,448.1) scale(1,1.13)" text-anchor="middle">1.5</text>
<text transform="translate(235.1,285.9) scale(1,1.13)" text-anchor="middle">2.0</text>
<text transform="translate(235.1,448.1) scale(1,1.13)" text-anchor="middle">2.0</text>
<text transform="translate(281.5,285.9) scale(1,1.13)" text-anchor="middle">2.5</text>
<text transform="translate(281.5,448.1) scale(1,1.13)" text-anchor="middle">2.5</text>
<text transform="translate(328.0,285.9) scale(1,1.13)" text-anchor="middle">3.0</text>
<text transform="translate(328.0,448.1) scale(1,1.13)" text-anchor="middle">3.0</text>
<text transform="translate(374.4,285.9) scale(1,1.13)" text-anchor="middle">3.5</text>
<text transform="translate(374.4,448.1) scale(1,1.13)" text-anchor="middle">3.5</text>
<text transform="translate(420.9,285.9) scale(1,1.13)" text-anchor="middle">4.0</text>
<text transform="translate(420.9,448.1) scale(1,1.13)" text-anchor="middle">4.0</text>
<text transform="translate(467.3,285.9) scale(1,1.13)" text-anchor="middle">4.5</text>
<text transform="translate(467.3,448.1) scale(1,1.13)" text-anchor="middle">4.5</text>
</g>
</svg>

<!-- Disk-Info -->
<div class="gb" style="left:491px;top:132px;width:140px;height:85px"></div>
<div class="lg h" style="left:498px;top:127px;background:#fcfcfd;padding:0 2px;letter-spacing:-0.2px">Disk-Info</div>
<div class="t h" style="left:499px;top:141px">Typ:</div><div class="t h v" style="left:545px;top:141px">DVD+R</div>
<div class="t h" style="left:499px;top:159px">ID:</div><div class="t h v" style="left:545px;top:159px">MCC 004</div>
<div class="t h" style="left:499px;top:177px">Datum:</div><div class="t h v" style="left:545px;top:177px">29 Feb 2008</div>
<div class="t h" style="left:499px;top:195px">Label:</div><div class="t h v" style="left:545px;top:195px;width:81px;overflow:hidden">COUNTRYGERMANY</div>

<!-- Einstellungen -->
<div class="gb" style="left:491px;top:223px;width:140px;height:205px"></div>
<div class="lg h" style="left:498px;top:218px;background:#f9f9fa;padding:0 2px;letter-spacing:0.1px">Einstellungen</div>
<div class="edit" style="left:500px;top:233px;width:84px;height:21px"></div>
<div class="t" style="left:504px;top:237px">8 X</div>
<div class="ddb" style="left:567px;top:235px"><svg width="15" height="15" viewBox="0 0 15 15" style="position:absolute;left:-1px;top:0"><path d="M4 5.5 L7.5 9 L11 5.5" fill="none" stroke="#4d6185" stroke-width="2"/></svg></div>
<div class="abs" style="left:592px;top:232px;width:23px;height:23px;border:1px solid #716f64;border-left-color:#fff;border-top-color:#fff;background:#ece9d8;box-shadow:inset -1px -1px 0 #aca899"></div>
<svg class="abs" style="left:596px;top:235px" width="15" height="17" viewBox="0 0 15 17">
  <rect x="0.5" y="0.5" width="13.5" height="16" fill="#fff" stroke="#111"/>
  <path d="M4 8.5 V6.5 Q4 4.8 5.5 4.8 H8" fill="none" stroke="#0a9a0a" stroke-width="1.4"/>
  <path d="M7.5 2.3 L10.5 4.8 L7.5 7.3 Z" fill="#0a9a0a"/>
  <path d="M10.5 8.5 V10.5 Q10.5 12.2 9 12.2 H6.5" fill="none" stroke="#0a9a0a" stroke-width="1.4"/>
  <path d="M7 9.7 L4 12.2 L7 14.7 Z" fill="#0a9a0a"/>
</svg>
<div class="t h" style="left:502px;top:265px">Start:</div>
<div class="edit" style="left:554px;top:259px;width:60px;height:20px"></div><div class="t h" style="left:557px;top:263px">0000 MB</div>
<div class="t h" style="left:502px;top:288px">Ende:</div>
<div class="edit" style="left:554px;top:282px;width:60px;height:20px"></div><div class="t h" style="left:557px;top:286px">4470 MB</div>

<div class="cb" style="left:502px;top:304px"></div><div class="t h" style="letter-spacing:0;left:518px;top:305px">Schnelles Scannen</div>
<div class="cb" style="left:502px;top:322px"><svg width="11" height="11" viewBox="0 0 11 11" style="position:absolute;left:0;top:0"><path d="M2 5 L4.5 7.5 L9 2.5" fill="none" stroke="#21a121" stroke-width="2"/></svg></div><div class="t h" style="letter-spacing:0;left:518px;top:323px">C1/PIE anzeigen</div>
<div class="cb" style="left:502px;top:337px"><svg width="11" height="11" viewBox="0 0 11 11" style="position:absolute;left:0;top:0"><path d="M2 5 L4.5 7.5 L9 2.5" fill="none" stroke="#21a121" stroke-width="2"/></svg></div><div class="t h" style="letter-spacing:0;left:518px;top:338px">C2/PIF anzeigen</div>
<div class="cb" style="left:502px;top:353px"><svg width="11" height="11" viewBox="0 0 11 11" style="position:absolute;left:0;top:0"><path d="M2 5 L4.5 7.5 L9 2.5" fill="none" stroke="#21a121" stroke-width="2"/></svg></div><div class="t h" style="letter-spacing:0;left:518px;top:354px">Jitter anzeigen</div>
<div class="cb" style="left:502px;top:369px"><svg width="11" height="11" viewBox="0 0 11 11" style="position:absolute;left:0;top:0"><path d="M2 5 L4.5 7.5 L9 2.5" fill="none" stroke="#21a121" stroke-width="2"/></svg></div><div class="t h" style="letter-spacing:0;left:518px;top:370px">Zeige Lesegeschw.</div>
<div class="cb dis" style="left:502px;top:384px"><svg width="11" height="11" viewBox="0 0 11 11" style="position:absolute;left:0;top:0"><path d="M2 5 L4.5 7.5 L9 2.5" fill="none" stroke="#cac8bb" stroke-width="2"/></svg></div><div class="t h" style="letter-spacing:0;left:518px;top:385px;color:#aca899">Zeige Schreibgeschw.</div>
<div class="btn" style="left:551px;top:402px;width:73px"><span class="t h" style="position:relative;display:inline-block">Erweitert</span></div>

<!-- Qualitaetsindex -->
<div class="gb" style="left:491px;top:433px;width:140px;height:27px"></div>
<div class="t h" style="left:501px;top:441px">Qualitätsindex:</div><div class="t h v r" style="left:580px;top:441px;width:41px">95</div>

<!-- Fortschritt -->
<div class="gb" style="left:491px;top:465px;width:140px;height:56px"></div>
<div class="t h" style="left:501px;top:475px">Fortschritt:</div><div class="t h v r" style="left:570px;top:475px;width:51px">100 %</div>
<div class="t h" style="left:501px;top:491px">Position:</div><div class="t h v r" style="left:570px;top:491px;width:51px">4469 MB</div>
<div class="t h" style="left:501px;top:506px">Geschwindigkeit:</div><div class="t h v r" style="left:570px;top:506px;width:51px">8.40 X</div>

<!-- PI Errors -->
<div class="gb2w" style="left:16px;top:466px;width:144px;height:56px"></div><div class="gb2" style="left:15px;top:465px;width:144px;height:56px"></div>
<div class="abs" style="left:24px;top:462px;width:8px;height:8px;border:1px solid #000;background:#00ffff"></div>
<div class="t h" style="left:35px;top:460px;letter-spacing:-0.5px">PI Errors</div>
<div class="t h" style="left:22px;top:476px">Durchschnitt</div><div class="t h v r" style="left:100px;top:476px;width:50px">1.33</div>
<div class="t h" style="left:22px;top:491px;letter-spacing:-0.55px">Maximum:</div><div class="t h v r" style="left:100px;top:491px;width:50px">29</div>
<div class="t h" style="left:22px;top:506px;letter-spacing:-0.4px">Gesamt:</div><div class="t h v r" style="left:100px;top:506px;width:50px">23858</div>

<!-- PI Failures -->
<div class="gb2w" style="left:173px;top:466px;width:146px;height:56px"></div><div class="gb2" style="left:172px;top:465px;width:146px;height:56px"></div>
<div class="abs" style="left:182px;top:462px;width:8px;height:8px;border:1px solid #000;background:#ffff00"></div>
<div class="t h" style="left:193px;top:460px;letter-spacing:-0.5px">PI Failures</div>
<div class="t h" style="left:181px;top:476px">Durchschnitt</div><div class="t h v r" style="left:259px;top:476px;width:50px">0.02</div>
<div class="t h" style="left:181px;top:491px;letter-spacing:-0.55px">Maximum:</div><div class="t h v r" style="left:259px;top:491px;width:50px">9</div>
<div class="t h" style="left:181px;top:506px;letter-spacing:-0.4px">Gesamt:</div><div class="t h v r" style="left:259px;top:506px;width:50px">2627</div>

<!-- Jitter -->
<div class="gb2w" style="left:332px;top:466px;width:146px;height:42px"></div><div class="gb2" style="left:331px;top:465px;width:146px;height:42px"></div>
<div class="abs" style="left:340px;top:462px;width:8px;height:8px;border:1px solid #000;background:#ff00ff"></div>
<div class="t h" style="left:351px;top:460px;letter-spacing:-0.5px">Jitter</div>
<div class="t h" style="left:340px;top:476px">Durchschnitt</div><div class="t h v r" style="left:417px;top:476px;width:51px">9.15 %</div>
<div class="t h" style="left:340px;top:491px;letter-spacing:-0.55px">Maximum:</div><div class="t h v r" style="left:417px;top:491px;width:51px">10.3 %</div>
<div class="t h" style="left:340px;top:510px">PO Ausfälle:</div><div class="t h v r" style="left:417px;top:510px;width:51px">0</div>

</body>
</html>
